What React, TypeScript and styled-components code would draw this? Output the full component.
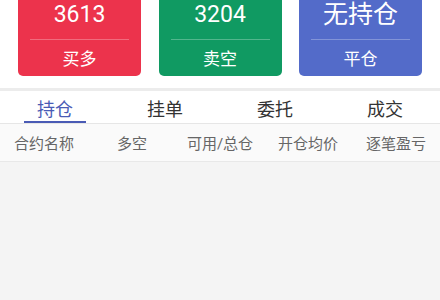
import React from "react";
import styled, { createGlobalStyle } from "styled-components";

const Global = createGlobalStyle`
  html, body { margin: 0; padding: 0; background: #f4f4f4; }
  body { font-family: Roboto, "Noto Sans CJK SC", "Noto Sans", sans-serif; }
  #root { min-height: 300px; }
`;

const Page = styled.div`
  width: 440px;
  height: 300px;
  overflow: hidden;
  background: #f4f4f4;
  display: flex;
  flex-direction: column;
`;

const CardRow = styled.div`
  background: #fff;
  display: grid;
  grid-template-columns: repeat(3, 123px);
  justify-content: space-between;
  padding: 0 18px 12px 18px;
  height: 76px;
  box-sizing: content-box;
`;

const Card = styled.div<{ $bg: string }>`
  background: ${(p) => p.$bg};
  border-radius: 0 0 5px 5px;
  color: #fff;
  display: flex;
  flex-direction: column;
  padding: 0 12px;
`;

const Value = styled.div<{ $big?: boolean }>`
  height: 40px;
  box-sizing: border-box;
  padding-bottom: 10px;
  display: flex;
  align-items: center;
  justify-content: center;
  font-size: ${(p) => (p.$big ? "25px" : "23px")};
  line-height: 30px;
  font-family: Roboto, "Noto Sans CJK SC", sans-serif;
  border-bottom: 1px solid rgba(255, 255, 255, 0.28);
`;

const Label = styled.div`
  flex: 1;
  display: flex;
  align-items: center;
  justify-content: center;
  font-size: 17px;
  padding-bottom: 1px;
`;

const Gap = styled.div`
  height: 3px;
  background: #ececec;
`;

const Tabs = styled.div`
  display: grid;
  grid-template-columns: repeat(4, 1fr);
  background: #fff;
  height: 32px;
  border-bottom: 1px solid #e6e6e6;
`;

const Tab = styled.div<{ $active?: boolean }>`
  display: flex;
  align-items: center;
  justify-content: center;
  position: relative;
  font-size: 18px;
  padding-top: 1px;
  color: ${(p) => (p.$active ? "#4a5bb5" : "#333")};
  &::after {
    content: "";
    display: ${(p) => (p.$active ? "block" : "none")};
    position: absolute;
    left: 24px;
    right: 24px;
    bottom: 0;
    height: 2px;
    background: #4a5bb5;
  }
`;

const Header = styled.div`
  display: grid;
  grid-template-columns: repeat(5, 1fr);
  background: #fafafa;
  height: 37px;
  border-bottom: 1px solid #e8e8e8;
`;

const Col = styled.div`
  display: flex;
  align-items: center;
  justify-content: center;
  font-size: 15px;
  color: #666;
`;

const Body = styled.div`
  flex: 1;
  background: #f4f4f4;
`;

const cards = [
  { v: "3613", l: "买多", bg: "#ec334c" },
  { v: "3204", l: "卖空", bg: "#109a62" },
  { v: "无持仓", l: "平仓", bg: "#536bc9", big: true },
];

const tabs = ["持仓", "挂单", "委托", "成交"];
const cols = ["合约名称", "多空", "可用/总仓", "开仓均价", "逐笔盈亏"];

export default function App() {
  return (
    <Page>
      <Global />
      <CardRow>
        {cards.map((c) => (
          <Card key={c.l} $bg={c.bg}>
            <Value $big={c.big}>{c.v}</Value>
            <Label>{c.l}</Label>
          </Card>
        ))}
      </CardRow>
      <Gap />
      <Tabs>
        {tabs.map((t, i) => (
          <Tab key={t} $active={i === 0}>
            {t}
          </Tab>
        ))}
      </Tabs>
      <Header>
        {cols.map((c) => (
          <Col key={c}>{c}</Col>
        ))}
      </Header>
      <Body />
    </Page>
  );
}
